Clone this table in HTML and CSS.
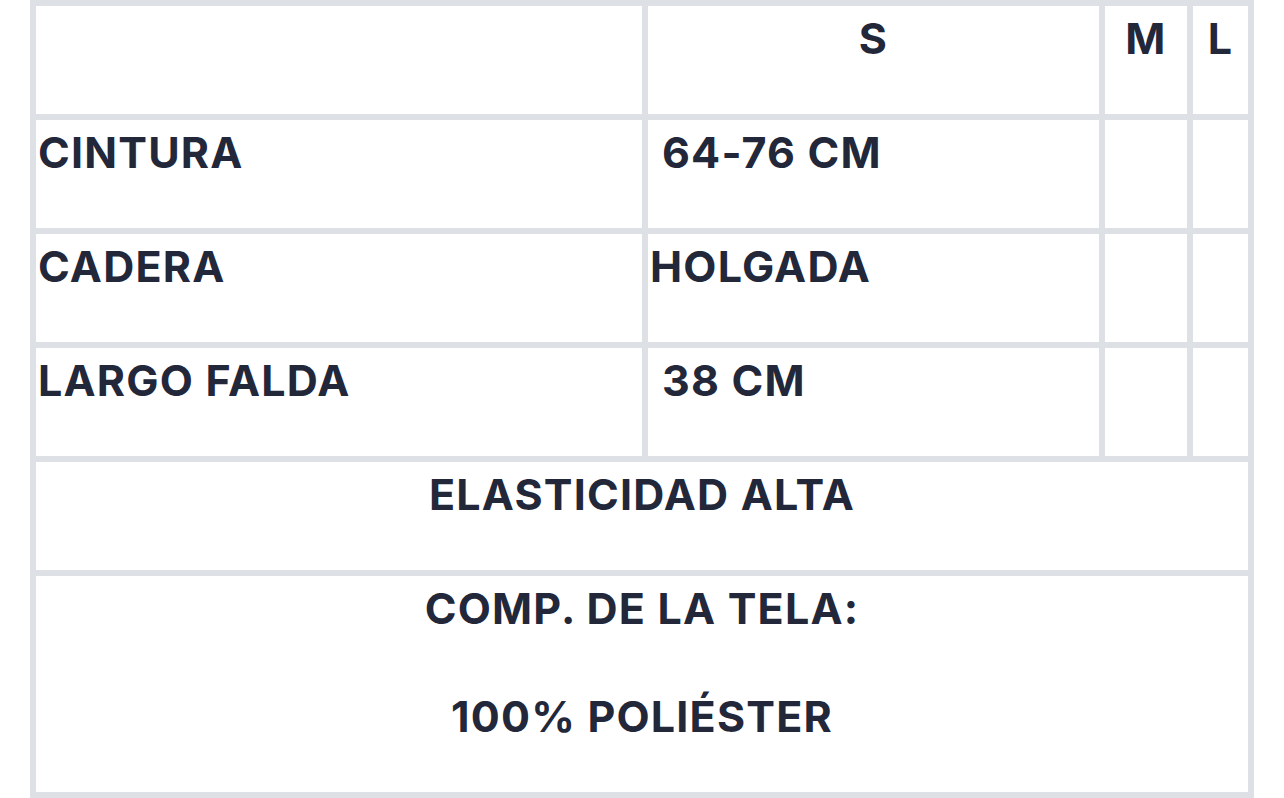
FILE: index.html
```html
<!DOCTYPE html>
<html lang="es">
<head>
<meta charset="utf-8">
<title>Tabla de tallas</title>
<link rel="stylesheet" href="styles.css">
</head>
<body>
<div class="sizes">
  <div class="cell"></div>
  <div class="cell center">S</div>
  <div class="cell center">M</div>
  <div class="cell center">L</div>

  <div class="cell">CINTURA</div>
  <div class="cell indent">64-76 CM</div>
  <div class="cell"></div>
  <div class="cell"></div>

  <div class="cell">CADERA</div>
  <div class="cell">HOLGADA</div>
  <div class="cell"></div>
  <div class="cell"></div>

  <div class="cell">LARGO FALDA</div>
  <div class="cell indent">38 CM</div>
  <div class="cell"></div>
  <div class="cell"></div>

  <div class="cell span center">ELASTICIDAD ALTA</div>

  <div class="cell span center">
    <p class="line">COMP. DE LA TELA:</p>
    <p class="line">100% POLIÉSTER</p>
  </div>
</div>
</body>
</html>
```

FILE: styles.css
```css
html, body {
  margin: 0;
  padding: 0;
  background: #ffffff;
}

body {
  font-family: "Inter", "Liberation Sans", sans-serif;
  font-weight: 700;
  color: #23273a;
}

.sizes {
  margin-left: 30px;
  width: 1224px;
  box-sizing: border-box;
  padding: 6px;
  background: #dde1e6;
  display: grid;
  grid-template-columns: 606px 451px 82px 55px;
  grid-template-rows: repeat(5, 108px) 216px;
  gap: 6px;
}

.cell {
  background: #ffffff;
  font-size: 43px;
  line-height: 52px;
  letter-spacing: 1.2px;
  padding: 6px 2px 0;
  box-sizing: border-box;
  white-space: nowrap;
}

.center {
  text-align: center;
  padding-left: 0;
  padding-right: 0;
}

.indent {
  padding-left: 14px;
}

.span {
  grid-column: 1 / -1;
}

.line {
  margin: 0 0 56px;
}
```
